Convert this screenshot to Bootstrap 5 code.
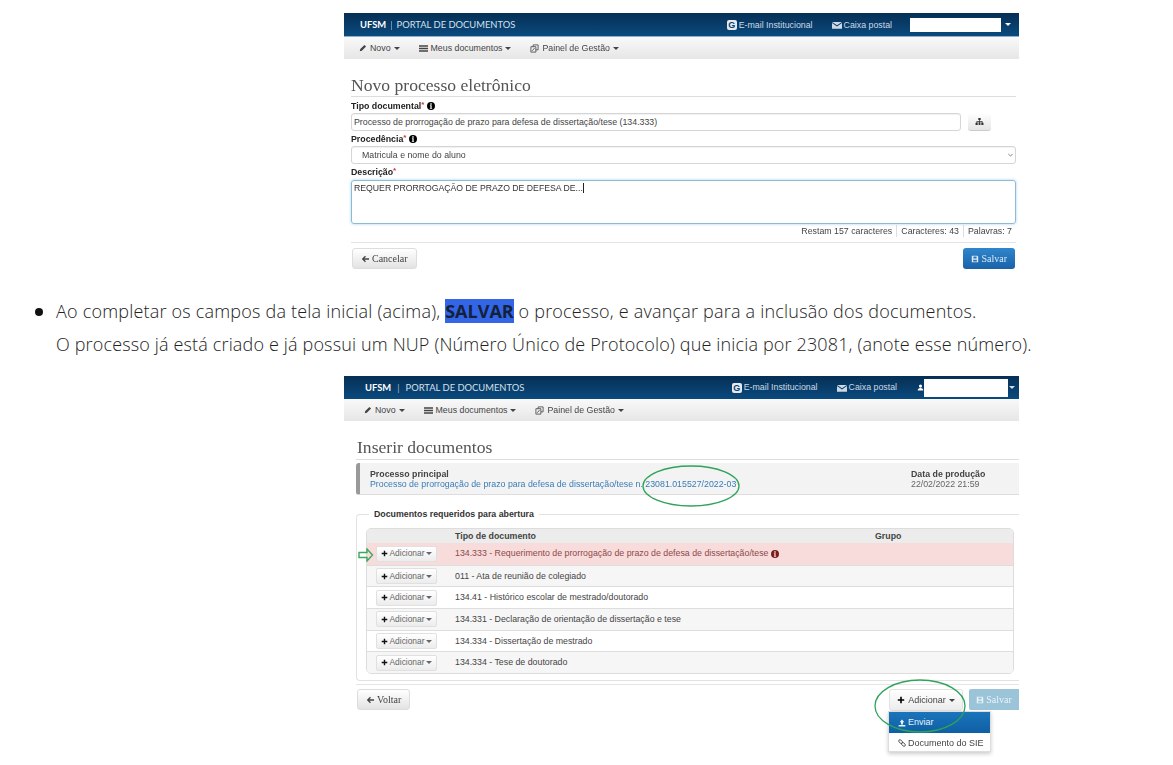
<!DOCTYPE html>
<html lang="pt-BR">
<head>
<meta charset="utf-8">
<title>Novo processo eletrônico</title>
<link href="https://cdn.jsdelivr.net/npm/bootstrap@5.3.0/dist/css/bootstrap.min.css" rel="stylesheet">
<style>
html,body{background:#fff;margin:0;overflow:hidden;height:765px}
body{font-family:"Liberation Sans",Arial,sans-serif;color:#444}
svg{display:inline-block;fill:currentColor;flex:none}
.shot{width:675px;margin-left:344px;position:relative;font-size:8.8px;line-height:11px;overflow:visible;filter:blur(.35px)}
.shot-one{margin-top:13px}
.shot-two{margin-top:15px}
.top-bar{height:24px;background:linear-gradient(#062f55,#0a4a7e);border-bottom:1px solid #8fb0cc;color:#cfdde9;padding:0 8px 0 16px}
.shot-two .top-bar{height:23px;border-bottom:0;padding:0 4px 0 21px}
.brand-line{font-family:Lato,sans-serif;font-size:9.4px;color:#d5e0ea}
.brand-line b{color:#fff}
.brand-line i{font-style:normal;opacity:.7;margin:0 4px}
.shot-two .brand-line i{margin:0 6px}
.top-link{color:#cdd9e4;gap:2px}
.shot-one .top-link{padding-top:1px}
.g-box{width:10px;height:10px;background:#e4eaef;border-radius:2px;color:#0a3f6c;font-weight:700;font-size:9px;line-height:10px;text-align:center}
.gap-mail{margin-left:19px;margin-right:18px}
.name-box{background:#fff;height:14px;width:91px}
.shot-two .name-box{height:18px;width:84px;margin-top:1px}
.shot-two .gap-mail{margin-right:20px}
.tri{display:inline-block;width:0;height:0;border-left:3px solid transparent;border-right:3px solid transparent;border-top:3.5px solid currentColor;vertical-align:middle}
.tight-tri{margin-left:1px}
.wide-tri{margin-left:4px}
.sub-bar{height:22px;background:linear-gradient(#f9f9f9,#e6e6e6);padding-left:15px;gap:19px;color:#444}
.shot-two .sub-bar{padding-left:20px}
.sub-item{gap:3px}
.page-body{padding:0 3px 0 7px}
.shot-two .page-body{padding:0 0 0 12px}
.page-title{font-family:"Liberation Serif",serif;font-size:17.6px;line-height:20px;font-weight:400;color:#555;margin:16px 0 0;padding-bottom:1px;border-bottom:1px solid #ddd}
.shot-two .page-title{margin-top:16px;padding:0 0 2px 1px}
.lbl{font-weight:700;color:#222;display:flex;align-items:center;gap:3px;height:15px;padding-top:1px}
.lbl sup{color:#c33;top:-1px;margin-left:-3px;font-size:8px;line-height:0;position:relative;vertical-align:baseline}
.first-lbl{margin-top:1px}
.field-box{height:18px;border:1px solid #d5d5d5;border-radius:3px;padding:0 2px;color:#444;background:#fff;box-shadow:inset 0 1px 1px rgba(0,0,0,.06)}
.select-box{padding:0 2px 0 10px}
.pick-btn{width:23px;height:18px;background:linear-gradient(#fff,#e6e6e6);border-radius:3px;border-bottom:1px solid #ccc;color:#333;margin:0 25px 0 7px}
.area-box{height:44px;border:1px solid #8dbbd6;border-radius:3px;padding:2px 2px 3px;box-shadow:0 0 3px rgba(102,175,233,.6);margin-top:1px;position:relative;color:#333;font-size:8.7px}
.caret-bar{display:inline-block;width:1px;height:10px;background:#222;vertical-align:-2px}
.count-line{justify-content:flex-end;height:12px;margin-top:1px;color:#444}
.count-line span{padding:0 4px;border-left:1px solid #ddd;line-height:12px}
.count-line span:first-child{border-left:0}
.split{border-top:1px solid #e5e5e5;margin-top:5px;padding:5px 1px 0 1px}
.soft-btn{height:21px;padding:0 8px;background:linear-gradient(#fff,#e3e3e3);border:1px solid #ddd;border-radius:3px;font-family:"Liberation Serif",serif;font-size:10px;color:#444;gap:3px}
.save-btn{height:21px;padding:0 8px;background:linear-gradient(#2f86cc,#1a62a8);border-radius:3px;font-family:"Liberation Serif",serif;font-size:10px;color:#dcebf7;gap:2px}
.prose{list-style:none;margin:26px 0 0;padding:0 0 0 56px;position:relative;font-family:"Open Sans",sans-serif;font-size:18px;letter-spacing:.2px;line-height:33px;color:#222;font-weight:300}
.prose .dot{position:absolute;left:35px;top:13px;width:8px;height:8px;border-radius:50%;background:#111}
.prose p{margin:0}
.prose p + p{letter-spacing:.15px}
.prose b{background:#3366e6;color:#14213d;font-weight:700;letter-spacing:0}
.note-box{height:32px;margin:3px 0 0;background:#f3f3f3;border-left:4px solid #999;border-bottom:1px solid #ddd;border-radius:3px 0 0 3px;padding:6px 0 0 10px;line-height:10px;color:#3a7cb5}
.note-box strong{color:#444;display:block}
.note-side{width:108px;color:#666}
.req-set{border:1px solid #e2e2e2;border-right:0;border-radius:4px 0 0 4px;margin:19px 0 0 0;padding:13px 5px 5px 9px;position:relative;height:167px}
.req-title{position:absolute;left:12px;top:-6px;background:#fff;padding:0 5px;font-weight:700;color:#333}
.doc-grid{border:1px solid #ddd;border-radius:5px;overflow:hidden}
.doc-head{height:14px;background:#ececec;padding-left:88px;font-weight:700;color:#444}
.doc-head span:first-child{width:420px}
.doc-row{height:21.7px;padding-left:9px;border-top:1px solid #ddd;background:#fff;color:#444}
.doc-row.alt{background:#f6f6f6}
.doc-row.bad{background:#f8dcdc;color:#8c4a4a;border-top:0}
.doc-row.bad svg.warn{color:#7a1c1c}
.add-btn{width:61px;height:16px;background:linear-gradient(#fff,#ececec);border:1px solid #e0e0e0;border-radius:2px;margin-right:18px;color:#666;gap:2px;justify-content:center;font-size:8.4px}
.add-btn svg{color:#111}
.split-two{border-top:1px solid #e5e5e5;margin-top:3px;padding:4px 0 0 1px}
.big-add{width:74px;height:22px;background:linear-gradient(#fff,#ececec);border:1px solid #e2e2e2;border-radius:3px;gap:3px;justify-content:center;color:#444;font-size:9px}
.pale-save{width:50px;height:21px;background:#9cc4d8;color:#e8f3f8;font-family:"Liberation Serif",serif;font-size:10px;gap:2px;justify-content:center;margin-left:6px;border-radius:2px 0 0 2px}
.menu-drop{position:absolute;left:544px;top:335px;width:103px;height:41px;background:#fff;border:1px solid #ddd;box-shadow:0 2px 4px rgba(0,0,0,.2);font-size:9px;color:#444}
.menu-item{height:20px;padding-left:9px;gap:2px}
.menu-item.on{background:linear-gradient(#1b75bb,#0f5fa3);color:#e8f2fa;height:21px}
.ring{position:absolute;overflow:visible;fill:none;stroke:#2ea35a;stroke-width:1.3}
.ring-one{left:298px;top:89px}
.ring-two{left:530px;top:303px}
.point-arrow{position:absolute;left:14px;top:172px;fill:none;stroke:#3aa85f;stroke-width:1.4}
</style>
</head>
<body>
<svg width="0" height="0" style="position:absolute">
<symbol id="pen" viewBox="0 0 10 10"><path d="M1 9l.6-2.600L6.800 1.200l2 2L3.600 8.400z"/></symbol>
<symbol id="rows" viewBox="0 0 10 10"><path d="M0 1.500h10v1.600H0zM0 4.200h10v1.600H0zM0 6.900h10v1.600H0z"/></symbol>
<symbol id="copy" viewBox="0 0 10 10"><path fill="none" stroke="currentColor" stroke-width=".9" d="M1 3h5.500v6H1zM3.500 3V1H9v5.500H6.500M2.500 7.500L5 4.500"/></symbol>
<symbol id="mail" viewBox="0 0 11 8"><path d="M0 .6h11L5.500 4.400zM0 1.800v6.200h11V1.800L5.500 5.600z"/></symbol>
<symbol id="info" viewBox="0 0 10 10"><path fill-rule="evenodd" d="M5 0a5 5 0 1 1 0 10A5 5 0 0 1 5 0zM4.100 1.600v1.700h1.800V1.600zM3.600 4v1h.6v2.400h-.6v1h2.800v-1h-.6V4z"/></symbol>
<symbol id="tree" viewBox="0 0 10 10"><path d="M3.700 1h2.600v2.400H5.400v1.400h3v1.500h1V9H7V6.300h.6v-.6H5.400v.6H6V9H4V6.300h.6v-.6H2.400v.6H3V9H.6V6.300h1V4.800h3V3.400h-.9z"/></symbol>
<symbol id="back" viewBox="0 0 10 10"><path d="M5 1l1.200 1.200L4.200 4.200H10v1.600H4.200l2 2L5 9 1 5z"/></symbol>
<symbol id="disk" viewBox="0 0 10 10"><path fill-rule="evenodd" d="M1 1h7l1 1v7H1zM3 2v2.500h4V2zM2.700 6v2h4.600V6z"/></symbol>
<symbol id="plus" viewBox="0 0 10 10"><path d="M4 1h2v3h3v2H6v3H4V6H1V4h3z"/></symbol>
<symbol id="up" viewBox="0 0 10 10"><path d="M5 .6L8 4H6.200v2.800H3.800V4H2zM.8 7.600h8.400V9.500H.8z"/></symbol>
<symbol id="chain" viewBox="0 0 10 10"><g transform="rotate(45 5 5)" fill="none" stroke="currentColor" stroke-width="1.100"><rect x="-.2" y="3.400" width="5.600" height="3.200" rx="1.600"/><rect x="4.600" y="3.400" width="5.600" height="3.200" rx="1.600"/></g></symbol>
<symbol id="person" viewBox="0 0 10 10"><path d="M5 .8a2.200 2.200 0 1 1 0 4.400A2.200 2.200 0 0 1 5 .8zM1 9.400c0-2.400 1.500-3.600 4-3.600s4 1.200 4 3.600z"/></symbol>
</svg>

<section class="shot shot-one">
  <div class="top-bar d-flex align-items-center">
    <div class="brand-line"><b>UFSM</b><i>|</i>PORTAL DE DOCUMENTOS</div>
    <div class="ms-auto d-flex align-items-center">
      <div class="top-link d-flex align-items-center"><span class="g-box">G</span><span>E-mail Institucional</span></div>
      <div class="top-link gap-mail d-flex align-items-center"><svg width="10" height="8"><use href="#mail"/></svg><span>Caixa postal</span></div>
      <div class="name-box"></div><span class="tri text-white wide-tri"></span>
    </div>
  </div>
  <div class="sub-bar d-flex align-items-center">
    <div class="sub-item d-flex align-items-center"><svg width="8" height="8"><use href="#pen"/></svg>Novo<span class="tri"></span></div>
    <div class="sub-item d-flex align-items-center"><svg width="9" height="9"><use href="#rows"/></svg>Meus documentos<span class="tri"></span></div>
    <div class="sub-item d-flex align-items-center"><svg width="9" height="9"><use href="#copy"/></svg>Painel de Gestão<span class="tri"></span></div>
  </div>
  <div class="page-body">
    <h1 class="page-title">Novo processo eletrônico</h1>
    <div class="lbl first-lbl">Tipo documental<sup>*</sup> <svg width="8" height="8" class="text-black"><use href="#info"/></svg></div>
    <div class="d-flex">
      <div class="field-box flex-grow-1 d-flex align-items-center">Processo de prorrogação de prazo para defesa de dissertação/tese (134.333)</div>
      <div class="pick-btn d-flex align-items-center justify-content-center"><svg width="9" height="9"><use href="#tree"/></svg></div>
    </div>
    <div class="lbl">Procedência<sup>*</sup> <svg width="8" height="8" class="text-black"><use href="#info"/></svg></div>
    <div class="field-box select-box d-flex align-items-center justify-content-between">Matricula e nome do aluno<svg width="5" height="4" viewBox="0 0 7 5"><path d="M.5 1l3 3 3-3" fill="none" stroke="#777" stroke-width="1.300"/></svg></div>
    <div class="lbl">Descrição<sup>*</sup></div>
    <div class="area-box">REQUER PRORROGAÇÃO DE PRAZO DE DEFESA DE...<span class="caret-bar"></span></div>
    <div class="count-line d-flex align-items-center"><span>Restam 157 caracteres</span><span>Caracteres: 43</span><span>Palavras: 7</span></div>
    <div class="split d-flex justify-content-between">
      <div class="soft-btn d-flex align-items-center"><svg width="8" height="8"><use href="#back"/></svg>Cancelar</div>
      <div class="save-btn d-flex align-items-center"><svg width="8" height="8"><use href="#disk"/></svg>Salvar</div>
    </div>
  </div>
</section>

<ul class="prose">
  <li><span class="dot"></span><p>Ao completar os campos da tela inicial (acima), <b>SALVAR</b> o processo, e avançar para a inclusão dos documentos.</p>
  <p>O processo já está criado e já possui um NUP (Número Único de Protocolo) que inicia por 23081, (anote esse número).</p></li>
</ul>

<section class="shot shot-two">
  <div class="top-bar d-flex align-items-center">
    <div class="brand-line"><b>UFSM</b><i>|</i>PORTAL DE DOCUMENTOS</div>
    <div class="ms-auto d-flex align-items-center">
      <div class="top-link d-flex align-items-center"><span class="g-box">G</span><span>E-mail Institucional</span></div>
      <div class="top-link gap-mail d-flex align-items-center"><svg width="10" height="8"><use href="#mail"/></svg><span>Caixa postal</span></div>
      <svg width="7" height="7" class="text-white"><use href="#person"/></svg>
      <div class="name-box"></div><span class="tri tight-tri"></span>
    </div>
  </div>
  <div class="sub-bar d-flex align-items-center">
    <div class="sub-item d-flex align-items-center"><svg width="8" height="8"><use href="#pen"/></svg>Novo<span class="tri"></span></div>
    <div class="sub-item d-flex align-items-center"><svg width="9" height="9"><use href="#rows"/></svg>Meus documentos<span class="tri"></span></div>
    <div class="sub-item d-flex align-items-center"><svg width="9" height="9"><use href="#copy"/></svg>Painel de Gestão<span class="tri"></span></div>
  </div>
  <div class="page-body">
    <h1 class="page-title">Inserir documentos</h1>
    <div class="note-box d-flex justify-content-between">
      <div><strong>Processo principal</strong>Processo de prorrogação de prazo para defesa de dissertação/tese n. 23081.015527/2022-03</div>
      <div class="note-side"><strong>Data de produção</strong>22/02/2022 21:59</div>
    </div>
    <div class="req-set">
      <div class="req-title">Documentos requeridos para abertura</div>
      <div class="doc-grid">
        <div class="doc-head d-flex align-items-center"><span>Tipo de documento</span><span>Grupo</span></div>
        <div class="doc-row bad d-flex align-items-center"><div class="add-btn d-flex align-items-center"><svg width="7" height="7"><use href="#plus"/></svg>Adicionar<span class="tri"></span></div>134.333 - Requerimento de prorrogação de prazo de defesa de dissertação/tese&nbsp;<svg width="8" height="8" class="warn"><use href="#info"/></svg></div>
        <div class="doc-row alt d-flex align-items-center"><div class="add-btn d-flex align-items-center"><svg width="7" height="7"><use href="#plus"/></svg>Adicionar<span class="tri"></span></div>011 - Ata de reunião de colegiado</div>
        <div class="doc-row d-flex align-items-center"><div class="add-btn d-flex align-items-center"><svg width="7" height="7"><use href="#plus"/></svg>Adicionar<span class="tri"></span></div>134.41 - Histórico escolar de mestrado/doutorado</div>
        <div class="doc-row alt d-flex align-items-center"><div class="add-btn d-flex align-items-center"><svg width="7" height="7"><use href="#plus"/></svg>Adicionar<span class="tri"></span></div>134.331 - Declaração de orientação de dissertação e tese</div>
        <div class="doc-row d-flex align-items-center"><div class="add-btn d-flex align-items-center"><svg width="7" height="7"><use href="#plus"/></svg>Adicionar<span class="tri"></span></div>134.334 - Dissertação de mestrado</div>
        <div class="doc-row alt d-flex align-items-center"><div class="add-btn d-flex align-items-center"><svg width="7" height="7"><use href="#plus"/></svg>Adicionar<span class="tri"></span></div>134.334 - Tese de doutorado</div>
      </div>
    </div>
    <div class="split-two d-flex align-items-start">
      <div class="soft-btn d-flex align-items-center"><svg width="8" height="8"><use href="#back"/></svg>Voltar</div>
      <div class="ms-auto d-flex align-items-start">
        <div class="big-add d-flex align-items-center"><svg width="8" height="8" class="text-black"><use href="#plus"/></svg>Adicionar<span class="tri"></span></div>
        <div class="pale-save d-flex align-items-center"><svg width="8" height="8"><use href="#disk"/></svg>Salvar</div>
      </div>
    </div>
  </div>
  <div class="menu-drop">
    <div class="menu-item on d-flex align-items-center"><svg width="8" height="8"><use href="#up"/></svg>Enviar</div>
    <div class="menu-item d-flex align-items-center"><svg width="8" height="8"><use href="#chain"/></svg>Documento do SIE</div>
  </div>
  <svg class="ring ring-one" width="100" height="44"><ellipse cx="49" cy="21" rx="48" ry="20"/></svg>
  <svg class="ring ring-two" width="92" height="56"><ellipse cx="46" cy="27" rx="45" ry="26"/></svg>
  <svg class="point-arrow" width="16" height="14" viewBox="0 0 16 14"><path d="M1 4.500h8V1l5.500 6L9 13V9.500H1z"/></svg>
</section>
</body>
</html>
